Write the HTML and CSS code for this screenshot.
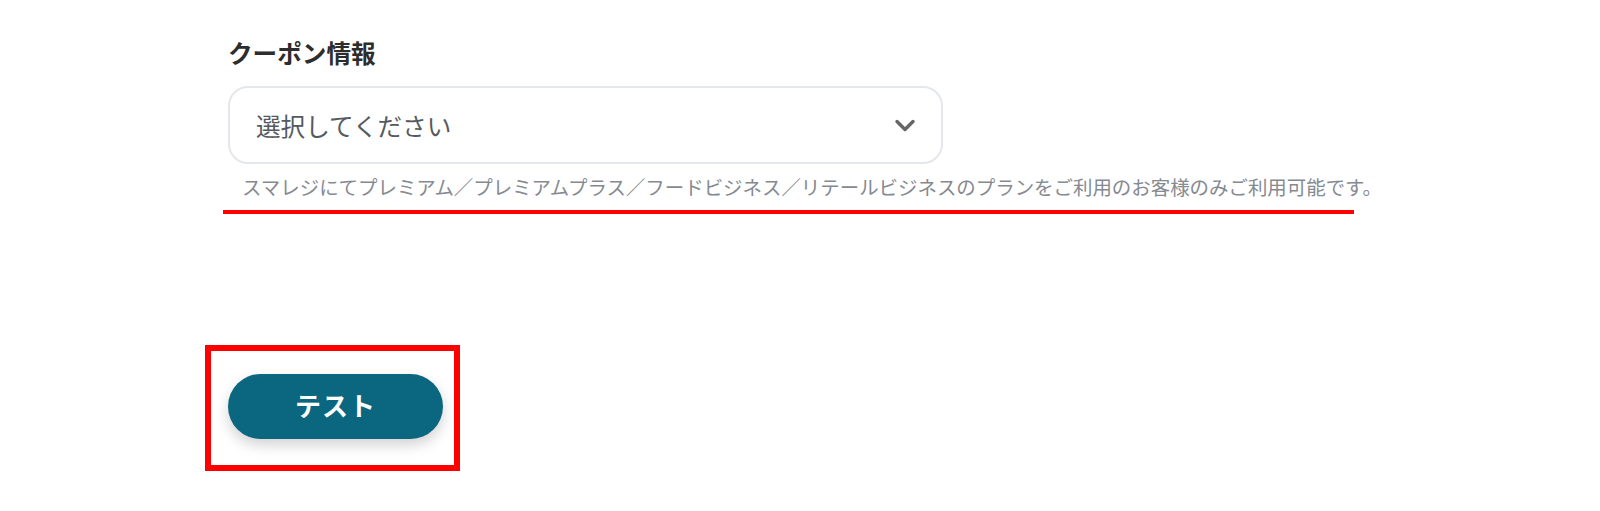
FILE: index.html
```html
<!DOCTYPE html>
<html lang="ja">
<head>
<meta charset="utf-8">
<title>クーポン情報</title>
<link rel="stylesheet" href="styles.css">
</head>
<body>
<main class="page">
  <section class="field">
    <div class="label">クーポン情報</div>
    <div class="select">
      <span class="placeholder">選択してください</span>
      <svg class="chevron" width="22" height="13" viewBox="0 0 22 13" aria-hidden="true">
        <path d="M3 2.5 L11 10.5 L19 2.5" fill="none" stroke="#666" stroke-width="3.4" stroke-linecap="round" stroke-linejoin="round"/>
      </svg>
    </div>
    <p class="help">スマレジにてプレミアム／プレミアムプラス／フードビジネス／リテールビジネスのプランをご利用のお客様のみご利用可能です。</p>
    <div class="underline"></div>
  </section>
  <div class="highlight">
    <button class="test-btn" type="button">テスト</button>
  </div>
</main>
</body>
</html>
```

FILE: styles.css
```css
html, body {
  margin: 0;
  padding: 0;
  background: #ffffff;
}

body {
  width: 1600px;
  height: 511px;
  overflow: hidden;
  font-family: "Noto Sans CJK JP", "Noto Sans", sans-serif;
}

.page {
  padding: 34px 0 0 228px;
}

.field {
  display: flex;
  flex-direction: column;
  align-items: flex-start;
}

.label {
  font-size: 24.6px;
  line-height: 36px;
  font-weight: 700;
  color: #2d2d2d;
}

.select {
  box-sizing: border-box;
  margin-top: 16px;
  width: 715px;
  height: 78px;
  border: 2px solid #e4e7eb;
  border-radius: 20px;
  padding: 0 25px 0 26px;
  display: flex;
  align-items: center;
  justify-content: space-between;
  background: #fff;
}

.placeholder {
  font-size: 24.6px;
  line-height: 36px;
  color: #555a60;
}

.chevron {
  display: block;
}

.help {
  margin: 9px 0 0 14px;
  font-size: 19.45px;
  line-height: 28px;
  color: #858a90;
  white-space: nowrap;
}

.underline {
  margin: 9px 0 0 -5px;
  width: 1131px;
  height: 4px;
  background: #ff0000;
}

.highlight {
  display: inline-flex;
  margin: 131px 0 0 -23px;
  border: 6px solid #ff0000;
  padding: 23px 11px 26px 17px;
}

.test-btn {
  width: 215px;
  height: 65px;
  border: none;
  border-radius: 33px;
  background: #0b6680;
  color: #ffffff;
  font-family: "Noto Sans CJK JP", "Noto Sans", sans-serif;
  font-size: 26px;
  line-height: 1;
  font-weight: 700;
  letter-spacing: 1px;
  padding: 0 0 3px 0;
  box-shadow: 0 6px 14px rgba(0, 0, 0, 0.18);
  cursor: pointer;
}
```
